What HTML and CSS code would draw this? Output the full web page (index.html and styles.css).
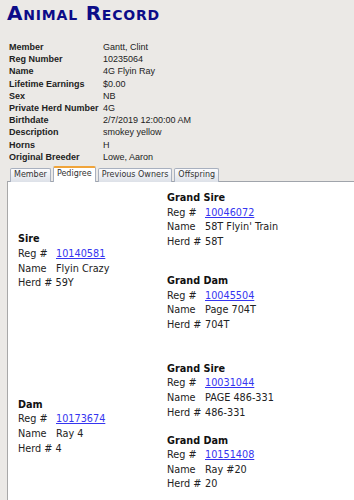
FILE: index.html
```html
<!DOCTYPE html>
<html lang="en">
<head>
    <meta charset="UTF-8">
    <meta name="viewport" content="width=device-width, initial-scale=1.0">
    <title>Animal Record</title>
    <link rel="stylesheet" href="styles.css">
</head>
<body>
    <h1 class="page-title">Animal Record</h1>
    <div class="info">
        <span class="info-label">Member</span><span>Gantt, Clint</span>
        <span class="info-label">Reg Number</span><span>10235064</span>
        <span class="info-label">Name</span><span>4G Flyin Ray</span>
        <span class="info-label">Lifetime Earnings</span><span>$0.00</span>
        <span class="info-label">Sex</span><span>NB</span>
        <span class="info-label">Private Herd Number</span><span>4G</span>
        <span class="info-label">Birthdate</span><span>2/7/2019 12:00:00 AM</span>
        <span class="info-label">Description</span><span>smokey yellow</span>
        <span class="info-label">Horns</span><span>H</span>
        <span class="info-label">Original Breeder</span><span>Lowe, Aaron</span>
    </div>
    <ul class="tabs">
        <li class="tab">Member</li>
        <li class="tab active">Pedigree</li>
        <li class="tab">Previous Owners</li>
        <li class="tab">Offspring</li>
    </ul>
    <div class="panel">
        <div class="family">
            <div class="parent">
                <div class="block">
                    <div class="block-title">Sire</div>
                    <div><span class="lbl">Reg #</span><a href="#">10140581</a></div>
                    <div><span class="lbl">Name</span>Flyin Crazy</div>
                    <div>Herd # 59Y</div>
                </div>
            </div>
            <div class="grands grands-sire">
                <div class="block">
                    <div class="block-title">Grand Sire</div>
                    <div><span class="lbl">Reg #</span><a href="#">10046072</a></div>
                    <div><span class="lbl">Name</span>58T Flyin' Train</div>
                    <div><span class="lbl">Herd #</span>58T</div>
                </div>
                <div class="block">
                    <div class="block-title">Grand Dam</div>
                    <div><span class="lbl">Reg #</span><a href="#">10045504</a></div>
                    <div><span class="lbl">Name</span>Page 704T</div>
                    <div><span class="lbl">Herd #</span>704T</div>
                </div>
            </div>
        </div>
        <div class="family family-dam">
            <div class="parent">
                <div class="block">
                    <div class="block-title">Dam</div>
                    <div><span class="lbl">Reg #</span><a href="#">10173674</a></div>
                    <div><span class="lbl">Name</span>Ray 4</div>
                    <div>Herd # 4</div>
                </div>
            </div>
            <div class="grands grands-dam">
                <div class="block">
                    <div class="block-title">Grand Sire</div>
                    <div><span class="lbl">Reg #</span><a href="#">10031044</a></div>
                    <div><span class="lbl">Name</span>PAGE 486-331</div>
                    <div><span class="lbl">Herd #</span>486-331</div>
                </div>
                <div class="block">
                    <div class="block-title">Grand Dam</div>
                    <div><span class="lbl">Reg #</span><a href="#">10151408</a></div>
                    <div><span class="lbl">Name</span>Ray #20</div>
                    <div><span class="lbl">Herd #</span>20</div>
                </div>
            </div>
        </div>
    </div>
</body>
</html>
```

FILE: styles.css
```css
body {
    margin: 0;
    padding: 0 0 0 7px;
    background: #ebe9e6;
    font-family: "Liberation Sans", Arial, sans-serif;
    color: #222;
    overflow: hidden;
}
.page-title {
    margin: 0;
    padding: 2px 0 0 0;
    font-family: "DejaVu Sans", Verdana, sans-serif;
    font-size: 20px;
    line-height: 22px;
    font-weight: bold;
    font-variant: small-caps;
    letter-spacing: 0.8px;
    color: #0c0c88;
}

/* Animal info table */
.info {
    display: grid;
    grid-template-columns: 94px auto;
    margin-top: 17px;
    padding-left: 2px;
    font-size: 9px;
    line-height: 12.2px;
}
.info-label {
    font-weight: bold;
}

/* Tabs */
.tabs {
    display: flex;
    gap: 2px;
    list-style: none;
    margin: 3px 0 -1px 0;
    padding: 0 0 0 3px;
    align-items: flex-end;
    font-family: "DejaVu Sans", Verdana, sans-serif;
    font-size: 8px;
    line-height: 12px;
    color: #333;
    position: relative;
    z-index: 2;
}
.tab {
    padding: 0 3px 1px 3px;
    border: 1px solid #a8b0bf;
    border-bottom: none;
    border-radius: 2px 2px 0 0;
    background: linear-gradient(#fbfbfd, #dde1e8);
}
.tab.active {
    background: #fff;
    border-top: 2px solid #f0a43a;
    border-color: #f0a43a #a8b0bf #fff;
    padding-bottom: 2px;
}

/* Pedigree panel */
.panel {
    background: #fff;
    border-top: 1px solid #a0a4ab;
    border-left: 1px solid #a8a8a8;
    padding: 9px 0 8px 10px;
    font-family: "DejaVu Sans", Verdana, sans-serif;
    font-size: 9.7px;
    line-height: 14.6px;
    color: #222;
    min-height: 320px;
}
.family {
    display: flex;
    align-items: center;
}
.family-dam {
    margin-top: 29.5px;
}
.parent {
    width: 149px;
}
.grands {
    display: flex;
    flex-direction: column;
}
.grands-sire {
    gap: 24.5px;
}
.grands-dam {
    gap: 13.5px;
}
.block-title {
    font-weight: bold;
    color: #111;
}
.lbl {
    display: inline-block;
    width: 38px;
}
.block a {
    color: #3535f0;
}
```
